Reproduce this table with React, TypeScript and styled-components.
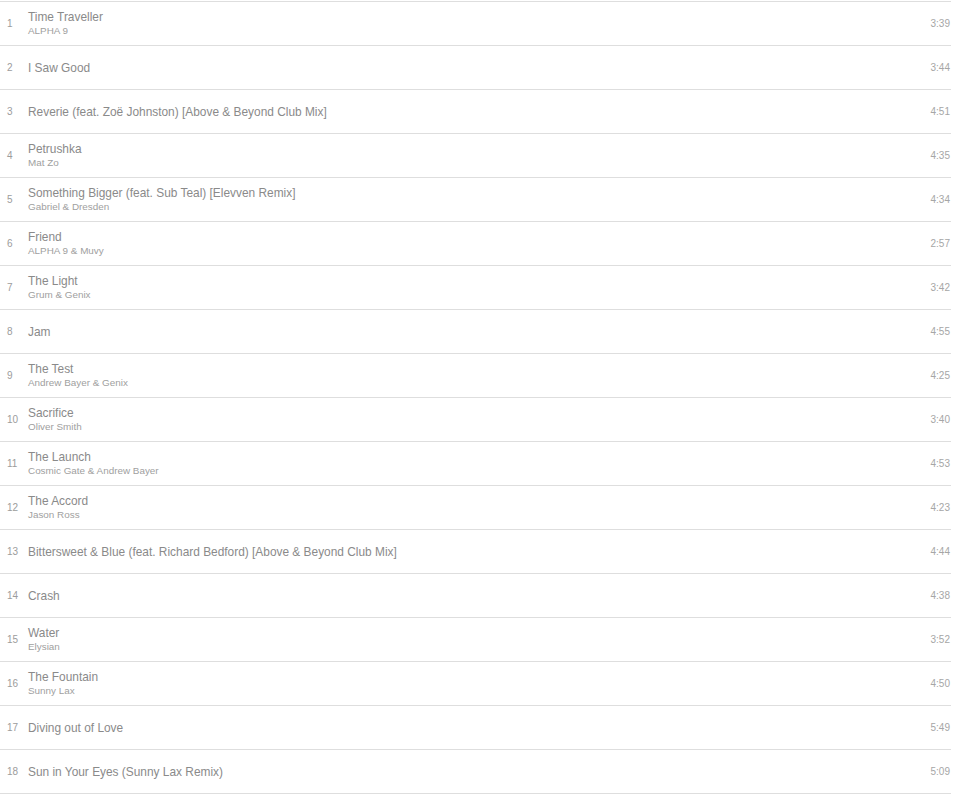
import React from 'react';
import styled, { createGlobalStyle } from 'styled-components';

const GlobalStyle = createGlobalStyle`
  html, body {
    margin: 0;
    padding: 0;
    background: #ffffff;
  }
  body {
    font-family: "Liberation Sans", Arial, sans-serif;
  }
`;

interface Track {
  title: string;
  artist?: string;
  duration: string;
}

const tracks: Track[] = [
  { title: 'Time Traveller', artist: 'ALPHA 9', duration: '3:39' },
  { title: 'I Saw Good', duration: '3:44' },
  { title: 'Reverie (feat. Zoë Johnston) [Above & Beyond Club Mix]', duration: '4:51' },
  { title: 'Petrushka', artist: 'Mat Zo', duration: '4:35' },
  { title: 'Something Bigger (feat. Sub Teal) [Elevven Remix]', artist: 'Gabriel & Dresden', duration: '4:34' },
  { title: 'Friend', artist: 'ALPHA 9 & Muvy', duration: '2:57' },
  { title: 'The Light', artist: 'Grum & Genix', duration: '3:42' },
  { title: 'Jam', duration: '4:55' },
  { title: 'The Test', artist: 'Andrew Bayer & Genix', duration: '4:25' },
  { title: 'Sacrifice', artist: 'Oliver Smith', duration: '3:40' },
  { title: 'The Launch', artist: 'Cosmic Gate & Andrew Bayer', duration: '4:53' },
  { title: 'The Accord', artist: 'Jason Ross', duration: '4:23' },
  { title: 'Bittersweet & Blue (feat. Richard Bedford) [Above & Beyond Club Mix]', duration: '4:44' },
  { title: 'Crash', duration: '4:38' },
  { title: 'Water', artist: 'Elysian', duration: '3:52' },
  { title: 'The Fountain', artist: 'Sunny Lax', duration: '4:50' },
  { title: 'Diving out of Love', duration: '5:49' },
  { title: 'Sun in Your Eyes (Sunny Lax Remix)', duration: '5:09' },
];

const TrackList = styled.ol`
  list-style: none;
  margin: 0;
  padding: 1px 0 0;
  width: 951px;
`;

const Row = styled.li`
  display: flex;
  align-items: center;
  height: 43px;
  border-top: 1px solid #dedede;

  &:last-child {
    border-bottom: 1px solid #dedede;
  }
`;

const Number = styled.span`
  width: 28px;
  padding-left: 7px;
  box-sizing: border-box;
  font-size: 10px;
  color: #9c9c9c;
  flex-shrink: 0;
`;

const Info = styled.div`
  flex: 1;
  display: flex;
  flex-direction: column;
  gap: 1px;
  padding-top: 1px;
`;

const Title = styled.span`
  font-size: 11.9px;
  color: #8a8a8a;
  line-height: 13px;
`;

const Artist = styled.span`
  font-size: 9.9px;
  color: #a0a0a0;
  line-height: 12px;
`;

const Duration = styled.span`
  font-size: 10px;
  color: #a6a6a6;
  padding-right: 1px;
`;

export default function App() {
  return (
    <>
      <GlobalStyle />
      <TrackList>
        {tracks.map((track, i) => (
          <Row key={i}>
            <Number>{i + 1}</Number>
            <Info>
              <Title>{track.title}</Title>
              {track.artist && <Artist>{track.artist}</Artist>}
            </Info>
            <Duration>{track.duration}</Duration>
          </Row>
        ))}
      </TrackList>
    </>
  );
}
